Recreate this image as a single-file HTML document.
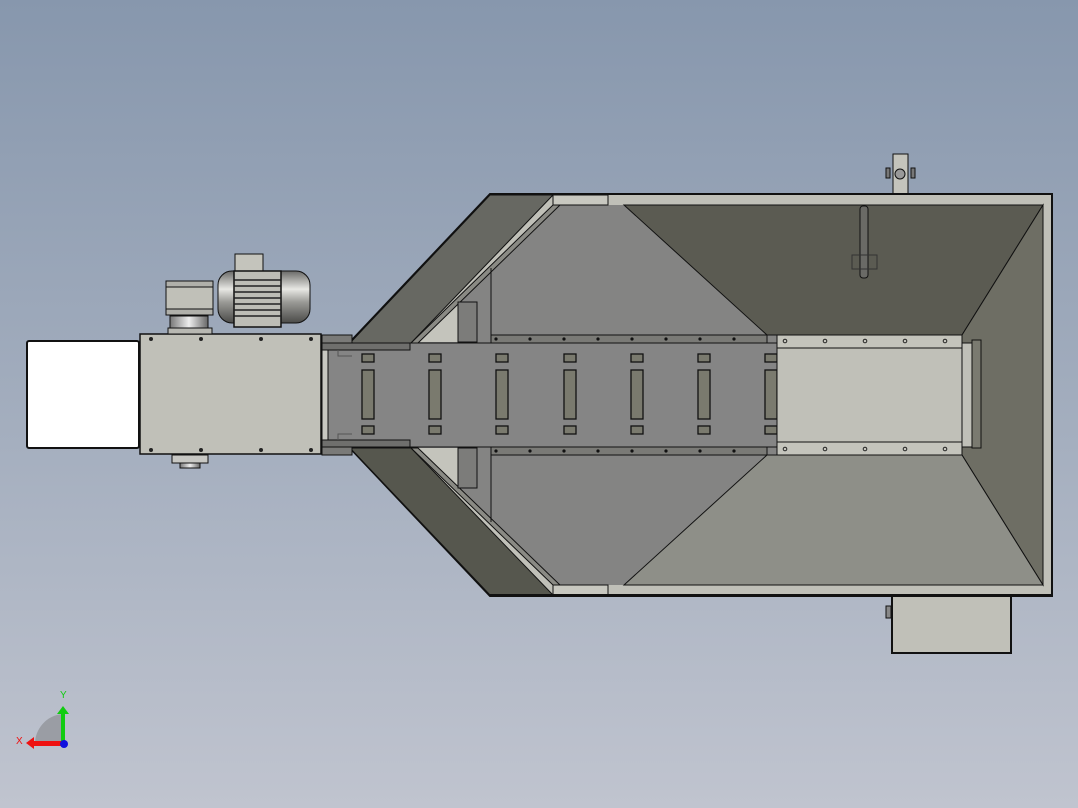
<!DOCTYPE html>
<html><head><style>
html,body{margin:0;padding:0;width:1078px;height:808px;overflow:hidden}
body{background:linear-gradient(#8797ad,#a5afbf 55%,#c0c4cf)}
svg{position:absolute;left:0;top:0}
</style></head><body>
<svg width="1078" height="808" viewBox="0 0 1078 808" stroke="#111" stroke-width="1">
<defs>
<linearGradient id="cyl" x1="0" y1="0" x2="0" y2="1">
<stop offset="0" stop-color="#6a6a68"/><stop offset="0.35" stop-color="#e8e8e4"/><stop offset="0.6" stop-color="#9a9a96"/><stop offset="1" stop-color="#4a4a48"/>
</linearGradient>
<linearGradient id="cylh" x1="0" y1="0" x2="1" y2="0">
<stop offset="0" stop-color="#777"/><stop offset="0.5" stop-color="#eee"/><stop offset="1" stop-color="#666"/>
</linearGradient>
</defs>
<!-- top bracket -->
<rect x="893" y="154" width="15" height="41" fill="#c4c4bc"/>
<circle cx="900" cy="174" r="5" fill="#999" />
<rect x="886" y="168" width="4" height="10" fill="#777"/><rect x="911" y="168" width="4" height="10" fill="#777"/>
<!-- bottom box -->
<rect x="892" y="596" width="119" height="57" fill="#c0c0b8" stroke-width="2"/>
<rect x="886" y="606" width="5" height="12" fill="#888"/>
<!-- hopper frame -->
<polygon points="490,194 1052,194 1052,596 490,596 350,448 350,342" fill="#c0c0b8" stroke-width="2"/>
<!-- diag walls -->
<polygon points="490,195 553,195 411,343 350,343" fill="#676862"/>
<polygon points="350,448 411,448 553,595 490,595" fill="#56574e"/>
<!-- inner -->
<polygon points="553,205 1043,205 1043,585 553,585 411,448 411,343" fill="#848483" stroke="none"/>
<polygon points="458,301 458,342 418,342" fill="#c4c4bc" stroke="none"/>
<polygon points="458,448 458,489 418,448" fill="#c4c4bc" stroke="none"/>
<polygon points="411,343 553,205 560,205 418,343" fill="#8a8a84"/>
<polygon points="411,448 418,448 560,585 553,585" fill="#8a8a84"/>
<line x1="491" y1="268" x2="491" y2="335"/><line x1="491" y1="455" x2="491" y2="522"/>
<rect x="458" y="302" width="19" height="40" fill="#7c7c7a"/>
<rect x="458" y="448" width="19" height="40" fill="#7c7c7a"/>
<polygon points="624,205 1043,205 962,335 767,335" fill="#5b5b52"/>
<polygon points="1043,205 1043,585 962,455 962,335" fill="#6e6e64"/>
<polygon points="767,455 962,455 1043,585 624,585" fill="#8e8f88"/>
<rect x="553" y="195" width="55" height="10" fill="#c8c8c0"/>
<rect x="553" y="585" width="55" height="10" fill="#c8c8c0"/>
<line x1="490" y1="595" x2="1052" y2="595" stroke-width="2"/>
<!-- slider -->
<rect x="860" y="206" width="8" height="72" rx="3" fill="#6a6a66"/>
<rect x="852" y="255" width="25" height="14" fill="none" stroke="#333"/>
<!-- rails -->
<rect x="491" y="335" width="276" height="8" fill="#7a7a76"/>
<rect x="491" y="447" width="276" height="8" fill="#7a7a76"/>
<g fill="#111" stroke="none">
<circle cx="496" cy="339" r="1.6"/><circle cx="530" cy="339" r="1.6"/><circle cx="564" cy="339" r="1.6"/><circle cx="598" cy="339" r="1.6"/><circle cx="632" cy="339" r="1.6"/><circle cx="666" cy="339" r="1.6"/><circle cx="700" cy="339" r="1.6"/><circle cx="734" cy="339" r="1.6"/>
<circle cx="496" cy="451" r="1.6"/><circle cx="530" cy="451" r="1.6"/><circle cx="564" cy="451" r="1.6"/><circle cx="598" cy="451" r="1.6"/><circle cx="632" cy="451" r="1.6"/><circle cx="666" cy="451" r="1.6"/><circle cx="700" cy="451" r="1.6"/><circle cx="734" cy="451" r="1.6"/>
</g>
<!-- trough -->
<rect x="322" y="335" width="30" height="120" fill="#7a7a78"/>
<rect x="322" y="343" width="455" height="104" fill="#858585"/>
<rect x="322" y="343" width="88" height="7" fill="#6f6f6d"/>
<rect x="322" y="440" width="88" height="7" fill="#6f6f6d"/>
<rect x="322" y="350" width="6" height="90" fill="#c8c8c2"/>
<path d="M338 350 V356 H352 M338 440 V434 H352" fill="none" stroke="#555"/>
<g fill="#7a7a6e" stroke-width="1.3">
<rect x="362" y="354" width="12" height="8"/><rect x="362" y="370" width="12" height="49"/><rect x="362" y="426" width="12" height="8"/>
<rect x="429" y="354" width="12" height="8"/><rect x="429" y="370" width="12" height="49"/><rect x="429" y="426" width="12" height="8"/>
<rect x="496" y="354" width="12" height="8"/><rect x="496" y="370" width="12" height="49"/><rect x="496" y="426" width="12" height="8"/>
<rect x="564" y="354" width="12" height="8"/><rect x="564" y="370" width="12" height="49"/><rect x="564" y="426" width="12" height="8"/>
<rect x="631" y="354" width="12" height="8"/><rect x="631" y="370" width="12" height="49"/><rect x="631" y="426" width="12" height="8"/>
<rect x="698" y="354" width="12" height="8"/><rect x="698" y="370" width="12" height="49"/><rect x="698" y="426" width="12" height="8"/>
<rect x="765" y="354" width="12" height="8"/><rect x="765" y="370" width="12" height="49"/><rect x="765" y="426" width="12" height="8"/>
</g>
<!-- tail section -->
<rect x="777" y="335" width="185" height="120" fill="#c0c0b8"/>
<rect x="777" y="335" width="185" height="13" fill="#c4c4bc"/>
<rect x="777" y="442" width="185" height="13" fill="#c4c4bc"/>
<g fill="none" stroke="#222"><circle cx="785" cy="341" r="1.8"/><circle cx="825" cy="341" r="1.8"/><circle cx="865" cy="341" r="1.8"/><circle cx="905" cy="341" r="1.8"/><circle cx="945" cy="341" r="1.8"/>
<circle cx="785" cy="449" r="1.8"/><circle cx="825" cy="449" r="1.8"/><circle cx="865" cy="449" r="1.8"/><circle cx="905" cy="449" r="1.8"/><circle cx="945" cy="449" r="1.8"/></g>
<rect x="962" y="343" width="10" height="104" fill="#c0c0b8"/>
<rect x="972" y="340" width="9" height="108" fill="#7a7a70"/>
<!-- drive box -->
<rect x="27" y="341" width="112" height="107" fill="#fff" stroke-width="2" rx="2"/>
<rect x="140" y="334" width="181" height="120" fill="#c0c0b8" stroke-width="1.5"/>
<g fill="#222" stroke="none">
<circle cx="151" cy="339" r="2"/><circle cx="201" cy="339" r="2"/><circle cx="261" cy="339" r="2"/><circle cx="311" cy="339" r="2"/>
<circle cx="151" cy="450" r="2"/><circle cx="201" cy="450" r="2"/><circle cx="261" cy="450" r="2"/><circle cx="311" cy="450" r="2"/>
</g>
<!-- motor -->
<rect x="166" y="281" width="47" height="34" fill="#c0c0b8"/>
<rect x="166" y="281" width="47" height="6" fill="#b0b0aa"/><rect x="166" y="309" width="47" height="6" fill="#b0b0aa"/>
<rect x="170" y="316" width="38" height="12" fill="url(#cylh)"/>
<rect x="168" y="328" width="44" height="6" fill="#b8b8b2"/>
<rect x="235" y="254" width="28" height="19" fill="#c4c4bc"/>
<rect x="218" y="271" width="92" height="52" rx="14" fill="url(#cyl)"/>
<rect x="234" y="271" width="47" height="56" fill="#bdbdb6" stroke-width="1.5"/>
<g stroke="#222" stroke-width="1.5"><line x1="234" y1="280" x2="281" y2="280"/><line x1="234" y1="286" x2="281" y2="286"/><line x1="234" y1="292" x2="281" y2="292"/><line x1="234" y1="298" x2="281" y2="298"/><line x1="234" y1="304" x2="281" y2="304"/><line x1="234" y1="310" x2="281" y2="310"/><line x1="234" y1="316" x2="281" y2="316"/></g>
<rect x="172" y="455" width="36" height="8" fill="#c8c8c4"/>
<rect x="180" y="463" width="20" height="5" fill="url(#cylh)"/>
<!-- axes -->
<path d="M35 745 A30 30 0 0 1 63 714 L63 745 Z" fill="#9a9da4" stroke="none"/>
<rect x="61" y="712" width="4" height="32" fill="#1c1" stroke="none"/>
<polygon points="57,714 63,706 69,714" fill="#1c1" stroke="none"/>
<rect x="34" y="741" width="28" height="5" fill="#e11" stroke="none"/>
<polygon points="34,737 26,743 34,749" fill="#e11" stroke="none"/>
<circle cx="64" cy="744" r="4" fill="#11d" stroke="none"/>
<text x="60" y="698" font-family="Liberation Sans,sans-serif" font-size="10" fill="#1c1" stroke="none">Y</text>
<text x="16" y="744" font-family="Liberation Sans,sans-serif" font-size="10" fill="#e11" stroke="none">X</text>
</svg>
</body></html>
